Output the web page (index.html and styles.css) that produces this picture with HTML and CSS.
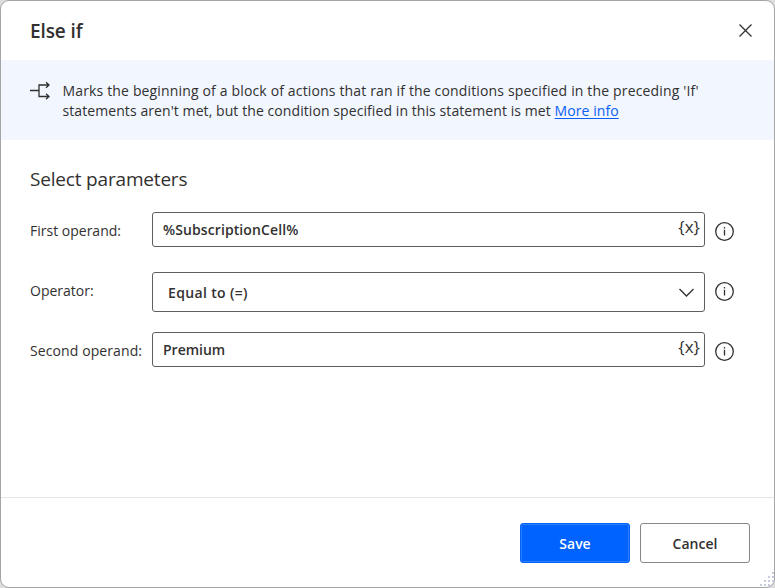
FILE: index.html
```html
<!DOCTYPE html>
<html lang="en">
<head>
<meta charset="utf-8">
<title>Else if</title>
<link rel="stylesheet" href="styles.css">
</head>
<body>
<main class="dialog">
  <header class="header">
    <h1 class="title">Else if</h1>
    <svg class="close" viewBox="0 0 14 14"><path d="M1.5 .5l12 12M13.5 .5L1.5 12.5"/></svg>
  </header>
  <section class="banner">
    <svg class="branch" viewBox="0 0 22 18"><path d="M0 9.5H9M19 4H9V15.5H19M16 1.3L19 4L16 6.7M16 12.8L19 15.5L16 18.2"/></svg>
    <p class="description"><span class="line-one">Marks the beginning of a block of actions that ran if the conditions specified in the preceding 'If'</span><br><span class="line-two">statements aren't met, but the condition specified in this statement is met <a class="link" href="#">More info</a></span></p>
  </section>
  <section class="body">
    <h2 class="subtitle">Select parameters</h2>
    <div class="row">
      <span class="label">First operand:</span>
      <div class="field"><span class="value value-first">%SubscriptionCell%</span><span class="variable">{x}</span></div>
      <svg class="info" viewBox="0 0 20 20"><circle cx="10.5" cy="10.5" r="8.8"/><path d="M10.5 8.8V14.6M10.5 6V7.5"/></svg>
    </div>
    <div class="row row-select">
      <span class="label">Operator:</span>
      <div class="field select"><span class="value value-select">Equal to (=)</span><svg class="chevron" viewBox="0 0 16 10"><path d="M1.5 2L8.5 9L15.5 2"/></svg></div>
      <svg class="info" viewBox="0 0 20 20"><circle cx="10.5" cy="10.5" r="8.8"/><path d="M10.5 8.8V14.6M10.5 6V7.5"/></svg>
    </div>
    <div class="row">
      <span class="label label-second">Second operand:</span>
      <div class="field"><span class="value">Premium</span><span class="variable">{x}</span></div>
      <svg class="info" viewBox="0 0 20 20"><circle cx="10.5" cy="10.5" r="8.8"/><path d="M10.5 8.8V14.6M10.5 6V7.5"/></svg>
    </div>
  </section>
  <footer class="footer">
    <button class="button primary">Save</button>
    <button class="button">Cancel</button>
  </footer>
  <svg class="grip" viewBox="0 0 14 14"><path d="M12 0h2v2h-2zM8 4h2v2H8zM12 4h2v2h-2zM4 8h2v2H4zM8 8h2v2H8zM12 8h2v2h-2zM0 12h2v2H0zM4 12h2v2H4zM8 12h2v2H8z"/></svg>
</main>
</body>
</html>
```
FILE: styles.css
```css
* { box-sizing: border-box; }
body {
  margin: 0;
  background: #dedede;
  color: #323130;
  font: 14px/20px "Open Sans", "Noto Sans", sans-serif;
}
h1, h2, p { margin: 0; }
svg { display: block; flex: none; fill: none; stroke: #323130; overflow: visible; }
.dialog {
  position: relative;
  display: flex;
  flex-direction: column;
  width: 775px;
  height: 588px;
  border: 1px solid #a5a5a5;
  border-radius: 9px;
  background: #fff;
  overflow: hidden;
}
.header {
  display: flex;
  align-items: center;
  justify-content: space-between;
  height: 59px;
  padding: 0 22px 0 29px;
}
.title { font-size: 19px; line-height: 24px; font-weight: 600; letter-spacing: -0.1px; white-space: nowrap; }
.close { width: 14px; height: 14px; stroke-width: 1.3; }
.banner {
  display: flex;
  height: 80px;
  padding: 21px 0 0 29px;
  background: #f1f6ff;
}
.branch { width: 22px; height: 18px; stroke-width: 1.3; margin-right: 10.5px; }
.description { white-space: nowrap; }
.line-one { letter-spacing: 0.155px; }
.line-two { letter-spacing: 0.08px; }
.link { color: #0a60f5; text-underline-offset: 2px; }
.body { flex: 1; padding: 26px 0 0 29px; }
.subtitle { font-size: 19px; line-height: 26px; font-weight: 400; letter-spacing: -0.18px; margin-bottom: 20px; }
.row { display: flex; height: 35px; margin-bottom: 25px; }
.row-select { height: 40px; margin-bottom: 20px; }
.label { width: 122px; padding-top: 9px; white-space: nowrap; }
.label-second { letter-spacing: 0.1px; }
.field {
  display: flex;
  align-items: flex-start;
  justify-content: space-between;
  width: 553px;
  border: 1px solid #605e5c;
  border-radius: 3px;
  padding: 7px 4px 0 10px;
}
.value { font-weight: 600; }
.value-first { letter-spacing: 0.1px; }
.value-select { letter-spacing: 0.35px; }
.variable { font-size: 17px; line-height: 18px; margin-top: -2px; }
.select { align-items: center; padding: 2px 10px 0 15px; }
.chevron { width: 16px; height: 10px; stroke-width: 1.3; margin-top: -2px; }
.info { width: 20px; height: 20px; stroke-width: 1.3; margin: 9px 0 0 9px; }
.footer {
  display: flex;
  gap: 10px;
  justify-content: flex-end;
  height: 90px;
  padding: 25px 24px 0 0;
  border-top: 1px solid #e5e5e5;
}
.button {
  width: 110px;
  height: 40px;
  padding: 2px 0 0;
  border: 1px solid #8a8886;
  border-radius: 3px;
  background: #fff;
  color: #323130;
  font: 600 14px/20px "Open Sans", "Noto Sans", sans-serif;
}
.primary { border-color: #0062ff; background: #0062ff; color: #fff; box-shadow: inset 0 0 0 1px #2d7dff; }
.grip { position: absolute; right: 0; bottom: 1px; width: 14px; height: 14px; stroke: none; fill: #c3cbdd; }
```
